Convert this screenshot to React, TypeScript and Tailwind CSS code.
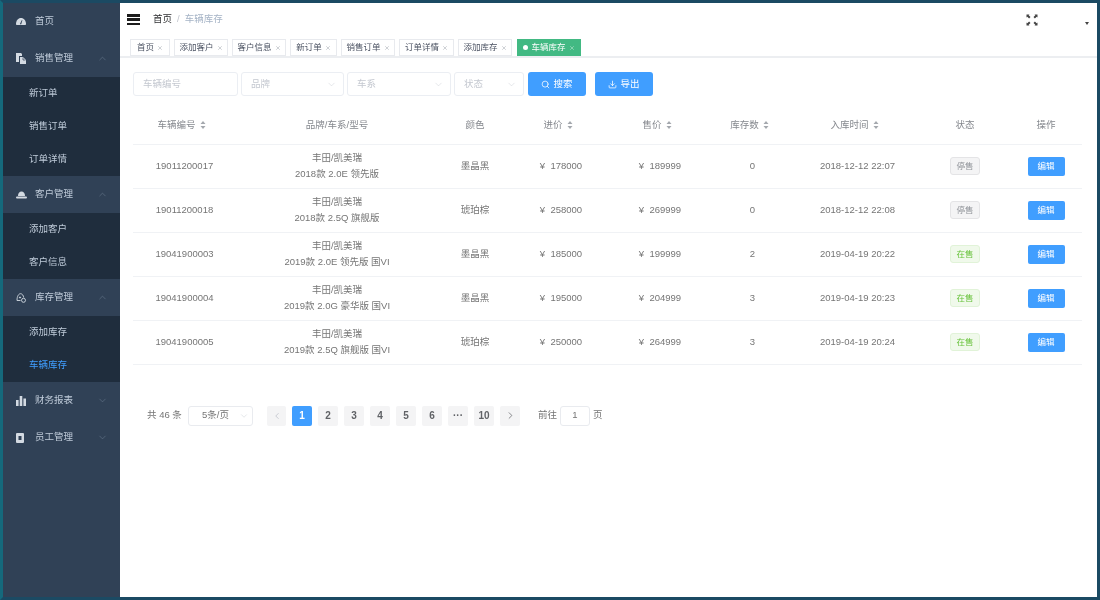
import React from "react";
import { ChevronUp, ChevronDown, ChevronLeft, ChevronRight, Search, Download, X } from "lucide-react";

const font = { fontFamily: '"Liberation Sans","Noto Sans CJK SC",sans-serif' };

const tags = [
  { t: "首页", w: "w-[40px]" },
  { t: "添加客户", w: "w-[54px]" },
  { t: "客户信息", w: "w-[54px]" },
  { t: "新订单", w: "w-[47px]" },
  { t: "销售订单", w: "w-[54px]" },
  { t: "订单详情", w: "w-[55px]" },
  { t: "添加库存", w: "w-[54px]" },
];

const rows = [
  ["19011200017", "2018款 2.0E 领先版", "墨晶黑", "178000", "189999", "0", "2018-12-12 22:07", false],
  ["19011200018", "2018款 2.5Q 旗舰版", "琥珀棕", "258000", "269999", "0", "2018-12-12 22:08", false],
  ["19041900003", "2019款 2.0E 领先版 国VI", "墨晶黑", "185000", "199999", "2", "2019-04-19 20:22", true],
  ["19041900004", "2019款 2.0G 豪华版 国VI", "墨晶黑", "195000", "204999", "3", "2019-04-19 20:23", true],
  ["19041900005", "2019款 2.5Q 旗舰版 国VI", "琥珀棕", "250000", "264999", "3", "2019-04-19 20:24", true],
] as const;

const IconHome = () => (
  <svg width="10" height="9" viewBox="0 0 10 9" fill="currentColor">
    <path d="M0 7.2C0 3.4 2.2 1 5 1s5 2.4 5 6.2c0 .6-.3.8-.8.8H.8C.3 8 0 7.800 0 7.200z" />
    <path d="M4.300 6.200 5.900 3l.5.3-1 3.200a.7.7 0 1 1-1.100-.3z" fill="#304156" />
  </svg>
);
const IconDocs = () => (
  <svg width="10" height="11" viewBox="0 0 10 11" fill="currentColor">
    <path d="M0 0h5l1 1v2H3v6H0z" />
    <path d="M4 4h3l3 3v4H4z" />
    <path d="M7 4.500V7h2.500" fill="none" stroke="#304156" strokeWidth=".7" />
  </svg>
);
const IconDome = () => (
  <svg width="11" height="8" viewBox="0 0 11 8" fill="currentColor">
    <path d="M2 5C2 2 3.500 .5 5.500 .5S9 2 9 5z" />
    <rect x="0" y="5.600" width="11" height="2" rx="1" />
  </svg>
);
const IconStock = () => (
  <svg width="11" height="10" viewBox="0 0 11 10" fill="none" stroke="currentColor" strokeWidth=".9">
    <path d="M1 7.500C1 3 2.800 .7 4.500 .7c1.700 0 3 1.800 3.200 3.800" />
    <path d="M1 7.500h3.500" />
    <circle cx="7.500" cy="7.300" r="2" />
    <circle cx="4" cy="4.500" r=".6" fill="currentColor" />
  </svg>
);
const IconBars = () => (
  <svg width="10" height="10" viewBox="0 0 10 10" fill="currentColor">
    <rect x="0" y="4" width="2.600" height="6" />
    <rect x="3.700" y="0" width="2.600" height="10" />
    <rect x="7.400" y="2.500" width="2.600" height="7.500" />
  </svg>
);
const IconBadge = () => (
  <svg width="8" height="10" viewBox="0 0 8 10" fill="currentColor">
    <path fillRule="evenodd" d="M1 0h6a1 1 0 0 1 1 1v8a1 1 0 0 1-1 1H1a1 1 0 0 1-1-1V1a1 1 0 0 1 1-1zm1.500 3v4h3V3z" />
  </svg>
);

function MenuHead({ icon, label, open }: { icon: React.ReactNode; label: string; open?: boolean }) {
  return (
    <div className="flex items-center h-[37px] pl-[13px] pr-[12px] text-[9.5px] text-[#bfcbd9]">
      <span className="w-[19px] flex items-center text-[#d3dae2]">{icon}</span>
      <span className="flex-1">{label}</span>
      {open === undefined ? null : open ? (
        <ChevronUp size={11} strokeWidth={1} className="text-[#76889b]" />
      ) : (
        <ChevronDown size={11} strokeWidth={1} className="text-[#76889b]" />
      )}
    </div>
  );
}

function Sub({ label, active }: { label: string; active?: boolean }) {
  return <div className={`flex items-center h-[33px] pl-[26px] text-[9.5px] ${active ? "text-[#409eff]" : "text-[#bfcbd9]"}`}>{label}</div>;
}

function Sel({ label, w }: { label: string; w: string }) {
  return (
    <div className={`${w} h-[24px] flex items-center justify-between pl-[9px] pr-[6px] border border-[#ebeef3] rounded-[3px] text-[9.5px] text-[#c4c8d0]`}>
      <span>{label}</span>
      <ChevronDown size={11} strokeWidth={1} className="text-[#c8ccd2]" />
    </div>
  );
}

function Sort() {
  return (
    <svg width="6" height="8" viewBox="0 0 6 8" className="inline-block ml-[4px] mr-[6px] align-[-1px] text-[#a4a8ae]" fill="currentColor">
      <path d="M3 0 5.500 3H.5zM3 8 .5 5h5z" />
    </svg>
  );
}

function Page({ children, active }: { children: React.ReactNode; active?: boolean }) {
  return (
    <div className={`w-[20px] h-[20px] rounded-[2px] flex items-center justify-center text-[10px] font-bold ${active ? "bg-[#409eff] text-white" : "bg-[#f4f4f5] text-[#606266]"}`}>
      {children}
    </div>
  );
}

export default function App() {
  return (
    <div style={font} className="w-[1100px] h-[600px] flex border-[3px] border-[#1b4a63] border-l-[#15697c] bg-white overflow-hidden blur-[0.5px]">
      <aside className="w-[117px] shrink-0 bg-[#304156]">
        <MenuHead label="首页" icon={<IconHome />} />
        <MenuHead open label="销售管理" icon={<IconDocs />} />
        <div className="bg-[#1f2d3d]">
          <Sub label="新订单" />
          <Sub label="销售订单" />
          <Sub label="订单详情" />
        </div>
        <MenuHead open label="客户管理" icon={<IconDome />} />
        <div className="bg-[#1f2d3d]">
          <Sub label="添加客户" />
          <Sub label="客户信息" />
        </div>
        <MenuHead open label="库存管理" icon={<IconStock />} />
        <div className="bg-[#1f2d3d]">
          <Sub label="添加库存" />
          <Sub active label="车辆库存" />
        </div>
        <MenuHead open={false} label="财务报表" icon={<IconBars />} />
        <MenuHead open={false} label="员工管理" icon={<IconBadge />} />
      </aside>

      <main className="flex-1 min-w-0 flex flex-col">
        <header className="h-[33px] shrink-0 flex items-center pl-[7px] pr-[8px]">
          <div className="w-[13px] h-[11px] flex flex-col justify-between">
            <div className="h-[2.5px] bg-[#1c1c1c]" />
            <div className="h-[2.5px] bg-[#1c1c1c]" />
            <div className="h-[2.5px] bg-[#1c1c1c]" />
          </div>
          <span className="ml-[13px] text-[9.5px] text-[#303133]">首页</span>
          <span className="mx-[5px] text-[9.5px] text-[#c0c4cc]">/</span>
          <span className="text-[9.5px] text-[#a5b3c6]">车辆库存</span>
          <div className="ml-auto flex items-center">
            <svg width="12" height="12" viewBox="0 0 12 12" className="text-[#444]" fill="currentColor">
              <path d="M.5.5h3L2.700 1.300l1.800 1.800-1.400 1.400-1.800-1.800L.5 3.500z" />
              <path d="M11.500.5h-3l.8.8-1.800 1.800 1.400 1.400 1.800-1.800.8.8z" />
              <path d="M.5 11.500h3l-.8-.8 1.800-1.800-1.400-1.400-1.800 1.800-.8-.8z" />
              <path d="M11.500 11.500h-3l.8-.8-1.800-1.800 1.400-1.400 1.800 1.800.8-.8z" />
            </svg>
            <div className="ml-[47px] w-0 h-0 mt-[8px] border-l-[2.5px] border-r-[2.5px] border-t-[3px] border-l-transparent border-r-transparent border-t-[#444]" />
          </div>
        </header>

        <div className="h-[22px] shrink-0 flex items-start pt-[3px] pl-[10px] border-b-2 border-[#eceef1] gap-[4px]">
          {tags.map((x) => (
            <div key={x.t} className={`${x.w} h-[17px] shrink-0 flex items-center justify-center gap-[3px] border border-[#e8eaee] text-[8.5px] text-[#495060]`}>
              {x.t}
              <X size={6} strokeWidth={1.5} className="text-[#7d8590]" />
            </div>
          ))}
          <div className="w-[64px] h-[17px] ml-[1px] shrink-0 flex items-center justify-center gap-[3px] bg-[#42b983] text-[8.5px] text-white">
            <span className="w-[5px] h-[5px] rounded-full bg-white" />
            车辆库存
            <X size={6} strokeWidth={1.5} />
          </div>
        </div>

        <div className="flex-1 pl-[13px] pr-[12px] pt-[14px] flex flex-col">
          <div className="flex items-center h-[24px] gap-[3px]">
            <div className="w-[105px] h-[24px] flex items-center pl-[9px] border border-[#ebeef3] rounded-[3px] text-[9.5px] text-[#c4c8d0]">车辆编号</div>
            <Sel label="品牌" w="w-[103px]" />
            <Sel label="车系" w="w-[104px]" />
            <Sel label="状态" w="w-[70px]" />
            <div className="ml-[1px] w-[58px] h-[24px] rounded-[3px] bg-[#409eff] flex items-center justify-center gap-[3px] text-[9.5px] text-white">
              <Search size={9} />
              搜索
            </div>
            <div className="ml-[6px] w-[58px] h-[24px] rounded-[3px] bg-[#409eff] flex items-center justify-center gap-[3px] text-[9.5px] text-white">
              <Download size={9} />
              导出
            </div>
          </div>

          <table className="mt-[10px] w-[949px] table-fixed border-collapse text-[9.5px] text-[#757575]">
            <colgroup>
              <col className="w-[103px]" />
              <col className="w-[202px]" />
              <col className="w-[74px]" />
              <col className="w-[98px]" />
              <col className="w-[100px]" />
              <col className="w-[85px]" />
              <col className="w-[125px]" />
              <col className="w-[90px]" />
              <col className="w-[72px]" />
            </colgroup>
            <thead>
              <tr className="h-[38px] border-b border-[#f0f2f5] text-[#85888e]">
                <th className="font-normal">车辆编号<Sort /></th>
                <th className="font-normal">品牌/车系/型号</th>
                <th className="font-normal">颜色</th>
                <th className="font-normal">进价<Sort /></th>
                <th className="font-normal">售价<Sort /></th>
                <th className="font-normal">库存数<Sort /></th>
                <th className="font-normal">入库时间<Sort /></th>
                <th className="font-normal">状态</th>
                <th className="font-normal">操作</th>
              </tr>
            </thead>
            <tbody>
              {rows.map((r) => (
                <tr key={r[0]} className="h-[44px] border-b border-[#f0f2f5] text-center">
                  <td>{r[0]}</td>
                  <td className="leading-[16px]">
                    <div>丰田/凯美瑞</div>
                    <div>{r[1]}</div>
                  </td>
                  <td>{r[2]}</td>
                  <td>¥&nbsp;&nbsp;{r[3]}</td>
                  <td>¥&nbsp;&nbsp;{r[4]}</td>
                  <td>{r[5]}</td>
                  <td>{r[6]}</td>
                  <td>
                    {r[7] ? (
                      <span className="inline-flex items-center justify-center w-[30px] h-[18px] rounded-[3px] border border-[#e1f3d8] bg-[#f0f9eb] text-[8.5px] text-[#67c23a]">在售</span>
                    ) : (
                      <span className="inline-flex items-center justify-center w-[30px] h-[18px] rounded-[3px] border border-[#e4e4e6] bg-[#f4f4f5] text-[8.5px] text-[#909399]">停售</span>
                    )}
                  </td>
                  <td>
                    <span className="inline-flex items-center justify-center w-[37px] h-[19px] rounded-[2px] bg-[#409eff] text-[8.5px] text-white">编辑</span>
                  </td>
                </tr>
              ))}
            </tbody>
          </table>

          <div className="mt-[41px] h-[20px] flex items-center pl-[14px] text-[9.5px] text-[#757575]">
            <span className="w-[41px]">共 46 条</span>
            <div className="w-[65px] h-[20px] flex items-center justify-between pl-[13px] pr-[3px] border border-[#e9ebef] rounded-[3px]">
              5条/页
              <ChevronDown size={10} strokeWidth={1} className="text-[#c0c4cc]" />
            </div>
            <div className="ml-[14px] w-[19px] h-[20px] rounded-[2px] bg-[#f4f4f5] flex items-center justify-center text-[#c0c4cc]">
              <ChevronLeft size={10} />
            </div>
            <div className="ml-[6px] flex gap-[6px]">
              <Page active>1</Page>
              <Page>2</Page>
              <Page>3</Page>
              <Page>4</Page>
              <Page>5</Page>
              <Page>6</Page>
              <Page>···</Page>
              <Page>10</Page>
              <Page><ChevronRight size={11} strokeWidth={1.6} /></Page>
            </div>
            <span className="ml-[18px]">前往</span>
            <div className="ml-[3px] w-[30px] h-[20px] flex items-center justify-center border border-[#e9ebef] rounded-[3px]">1</div>
            <span className="ml-[3px]">页</span>
          </div>
        </div>
      </main>
    </div>
  );
}
